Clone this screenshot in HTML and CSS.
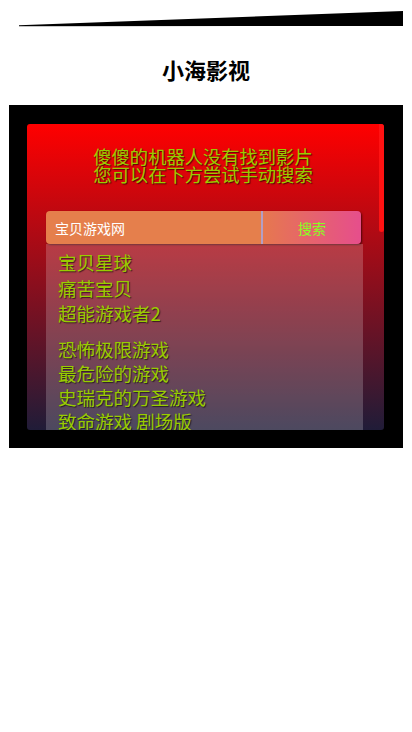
FILE: index.html
```html
<!DOCTYPE html>
<html lang="zh-CN">
<head>
<meta charset="utf-8">
<meta name="viewport" content="width=device-width, initial-scale=1">
<title>小海影视</title>
<link rel="stylesheet" href="styles.css">
</head>
<body>
<div class="deco">
  <svg width="412" height="30" viewBox="0 0 412 30" xmlns="http://www.w3.org/2000/svg">
    <polygon points="19,25.3 403,11 403,26 19,26.3" fill="#000"/>
  </svg>
</div>
<h1 class="title">小海影视</h1>
<div class="frame">
  <div class="card">
    <div class="content">
      <p class="message">傻傻的机器人没有找到影片<br>您可以在下方尝试手动搜索</p>
      <div class="search">
        <div class="search-input">宝贝游戏网</div>
        <div class="search-btn">搜索</div>
      </div>
      <ul class="results">
        <li class="item loose">宝贝星球</li>
        <li class="item loose">痛苦宝贝</li>
        <li class="item loose group-end">超能游戏者2</li>
        <li class="item">恐怖极限游戏</li>
        <li class="item">最危险的游戏</li>
        <li class="item">史瑞克的万圣游戏</li>
        <li class="item">致命游戏 剧场版</li>
      </ul>
    </div>
    <div class="scroll-track"><div class="scroll-thumb"></div></div>
  </div>
</div>
</body>
</html>
```
FILE: styles.css
```css
html, body {
  margin: 0;
  padding: 0;
  background: #fff;
}
body {
  width: 412px;
  font-family: "Noto Sans CJK SC", "Noto Sans", sans-serif;
}
.deco svg {
  display: block;
}
.title {
  margin: 24px 0 21px;
  height: 30px;
  line-height: 30px;
  font-size: 22px;
  font-weight: bold;
  text-align: center;
  color: #000;
}
.frame {
  margin: 0 9px;
  padding: 19px 19px 18px 18px;
  background: #000;
}
.card {
  height: 306px;
  border-radius: 3px;
  overflow: hidden;
  display: flex;
  background: linear-gradient(to bottom, #ff0000 0%, #201c38 100%);
}
.content {
  flex: 1;
  min-width: 0;
  padding: 22.5px 16px 0 19px;
}
.message {
  margin: 0 3px 0 0;
  font-size: 18.3px;
  line-height: 18px;
  text-align: center;
  color: #99cc00;
  text-shadow: 1px 1px 1px rgba(0, 0, 0, 0.6);
}
.search {
  margin: 28.5px 2px 0 0;
  height: 33px;
  display: flex;
  border-radius: 4px;
  overflow: hidden;
  box-shadow: 1px 1px 2px rgba(0, 0, 0, 0.55);
}
.search-input {
  width: 206px;
  padding-left: 9px;
  display: flex;
  align-items: center;
  background: #e57f4c;
  color: #fff;
  font-size: 14px;
  border-right: 2px solid #b49ec4;
}
.search-btn {
  flex: 1;
  display: flex;
  align-items: center;
  justify-content: center;
  background: linear-gradient(to right, #e6784f, #e64e8c);
  color: #86ff22;
  font-size: 14px;
}
.results {
  list-style: none;
  margin: 0;
  padding: 6.25px 12px 0;
  height: 200px;
  background: rgba(255, 255, 255, 0.2);
}
.item {
  font-size: 18.5px;
  line-height: 24px;
  color: #99cc00;
  text-shadow: 1px 1px 1px rgba(0, 0, 0, 0.6);
  white-space: nowrap;
}
.item.loose {
  line-height: 25.5px;
}
.item.group-end {
  margin-bottom: 10.25px;
}
.scroll-track {
  width: 5px;
  flex: none;
}
.scroll-thumb {
  height: 108px;
  background: #ff1212;
  border-radius: 0 0 3px 3px;
}
```
